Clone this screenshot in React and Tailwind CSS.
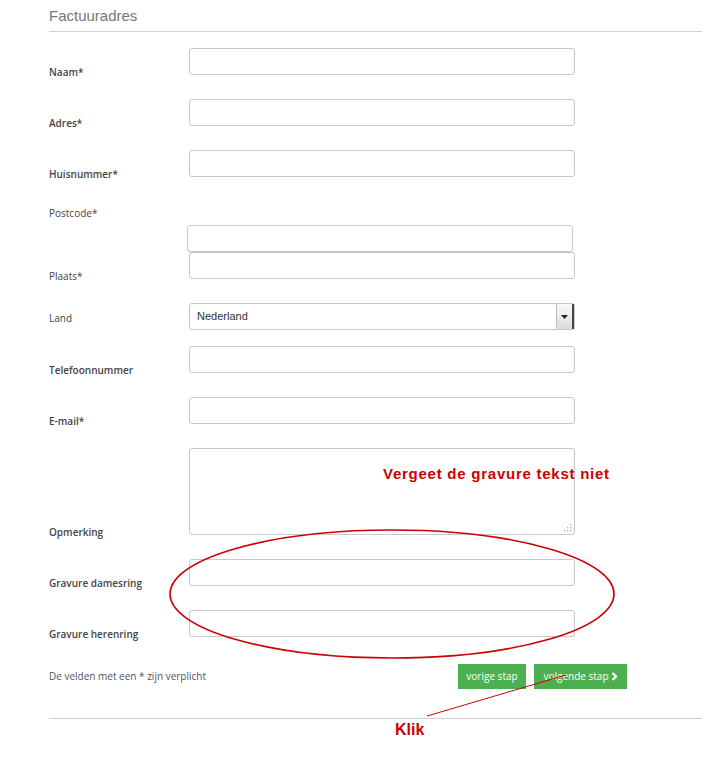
import React from 'react';

const font = { fontFamily: '"Open Sans", "Liberation Sans", sans-serif' };

const Field = ({ label, bold = true, mt = 'mt-6', children }) => (
  <div className={`flex items-end ${mt}`}>
    <label
      className={`w-[140px] shrink-0 text-[10px] leading-[14px] mb-[-4px] text-[#444] ${bold ? 'font-semibold' : 'font-normal'}`}
    >
      {label}
    </label>
    {children}
  </div>
);

const Input = ({ className = '' }) => (
  <input
    type="text"
    className={`w-[386px] h-[27px] border border-[#c8c8c8] rounded-[3px] bg-white outline-none ${className}`}
  />
);

const App = () => {
  return (
    <div className="relative w-[702px] h-[775px] bg-white overflow-hidden" style={font}>
      <div className="ml-[49px] w-[653px]">
        {/* Heading */}
        <div className="pt-[6px] pb-[5px] border-b border-[#cfcfcf]">
          <h2 className="text-[15px] leading-[20px] text-[#777]" style={{ fontFamily: '"Liberation Sans", Arial, sans-serif' }}>
            Factuuradres
          </h2>
        </div>

        <Field label="Naam*" mt="mt-4">
          <Input />
        </Field>
        <Field label="Adres*">
          <Input />
        </Field>
        <Field label="Huisnummer*">
          <Input />
        </Field>

        {/* Postcode */}
        <div className="mt-[29px] text-[10px] leading-[14px] text-[#444]">Postcode*</div>
        <div className="mt-[5px] ml-[138px]">
          <Input />
        </div>
        <div className="flex items-end">
          <label className="w-[140px] shrink-0 text-[10px] leading-[14px] mb-[-4px] text-[#444]">Plaats*</label>
          <Input />
        </div>

        {/* Land */}
        <div className="flex items-center mt-6">
          <label className="w-[140px] shrink-0 text-[10px] leading-[14px] text-[#444] mt-[2px]">Land</label>
          <div className="w-[386px] h-[27px] border border-[#c8c8c8] rounded-[3px] bg-white flex items-center justify-between">
            <span className="pl-[7px] text-[11px] text-[#333]" style={{ fontFamily: '"Liberation Sans", Arial, sans-serif' }}>
              Nederland
            </span>
            <div className="w-[18px] h-[25px] border-l border-[#bbb] border-r-2 border-r-[#444] bg-gradient-to-b from-[#fafafa] to-[#dcdcdc] flex items-center justify-center">
              <svg width="7" height="4" viewBox="0 0 7 4">
                <path d="M0 0 L7 0 L3.5 4 Z" fill="#222" />
              </svg>
            </div>
          </div>
        </div>

        <Field label="Telefoonnummer" mt="mt-4">
          <Input />
        </Field>
        <Field label="E-mail*">
          <Input />
        </Field>

        <Field label="Opmerking">
          <div className="relative w-[386px] h-[87px] border border-[#c8c8c8] rounded-[3px] bg-white">
            <textarea className="w-full h-full resize-none outline-none bg-transparent" />
            <svg className="absolute right-[2px] bottom-[2px]" width="8" height="8" viewBox="0 0 8 8">
              <rect x="6" y="0" width="1.3" height="1.3" fill="#aaa" />
              <rect x="3" y="3" width="1.3" height="1.3" fill="#aaa" />
              <rect x="6" y="3" width="1.3" height="1.3" fill="#aaa" />
              <rect x="0" y="6" width="1.3" height="1.3" fill="#aaa" />
              <rect x="3" y="6" width="1.3" height="1.3" fill="#aaa" />
              <rect x="6" y="6" width="1.3" height="1.3" fill="#aaa" />
            </svg>
          </div>
        </Field>

        <Field label="Gravure damesring">
          <Input />
        </Field>
        <Field label="Gravure herenring">
          <Input />
        </Field>

        {/* Footer */}
        <div className="mt-[27px] w-[578px] flex items-center justify-between">
          <span className="text-[10px] text-[#555]">De velden met een * zijn verplicht</span>
          <div className="flex gap-2">
            <button className="h-[25px] w-[68px] bg-[#4cb050] text-white text-[10px]">vorige stap</button>
            <button className="h-[25px] w-[93px] bg-[#4cb050] text-white text-[10px] flex items-center justify-center gap-[2px]">
              volgende stap
              <svg width="7" height="9" viewBox="0 0 7 9">
                <path d="M1.5 1 L5 4.5 L1.5 8" stroke="white" strokeWidth="2.2" fill="none" />
              </svg>
            </button>
          </div>
        </div>

        <div className="mt-[29px] border-b border-[#cfcfcf]" />
      </div>

      {/* Annotations */}
      <span
        className="absolute left-[383px] top-[465px] text-[15px] font-bold tracking-[0.75px] text-[#cc0000] leading-[18px]"
        style={{ fontFamily: '"Liberation Sans", Arial, sans-serif' }}
      >
        Vergeet de gravure tekst niet
      </span>
      <svg className="absolute left-0 top-0 pointer-events-none" width="702" height="775">
        <ellipse cx="392" cy="594" rx="222" ry="64" fill="none" stroke="#cc0000" strokeWidth="1.6" />
        <line x1="427" y1="716" x2="566" y2="675" stroke="#cc0000" strokeWidth="1" />
      </svg>
      <span
        className="absolute left-[395px] top-[720px] text-[16px] font-bold text-[#cc0000] leading-[20px]"
        style={{ fontFamily: '"Liberation Sans", Arial, sans-serif' }}
      >
        Klik
      </span>
    </div>
  );
};

export default App;
